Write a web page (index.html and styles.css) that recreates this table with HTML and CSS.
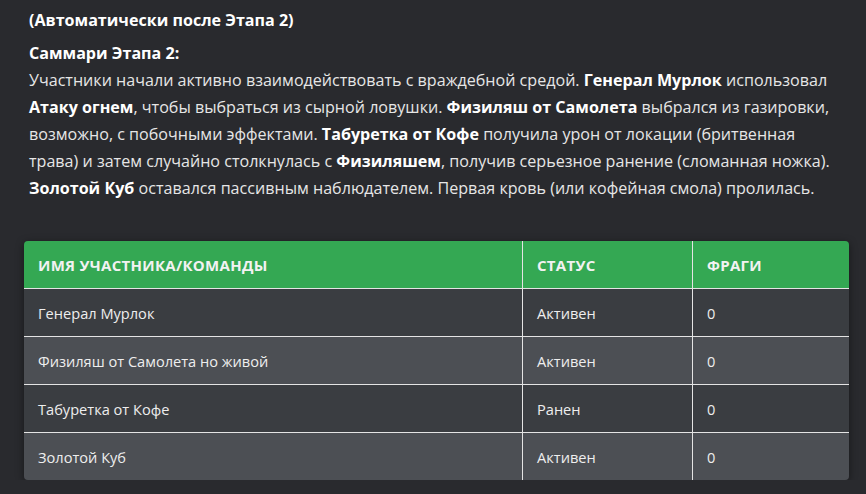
FILE: index.html
```html
<!DOCTYPE html>
<html lang="ru">
<head>
<meta charset="utf-8">
<link rel="stylesheet" href="styles.css">
</head>
<body>
<main class="page">
  <p class="title"><strong>(Автоматически после Этапа 2)</strong></p>
  <p class="summary"><strong>Саммари Этапа 2:</strong><br>Участники начали активно взаимодействовать с враждебной средой. <strong>Генерал Мурлок</strong> использовал <strong>Атаку огнем</strong>, чтобы выбраться из сырной ловушки. <strong>Физиляш от Самолета</strong> выбрался из газировки, возможно, с побочными эффектами. <strong>Табуретка от Кофе</strong> получила урон от локации (бритвенная трава) и затем случайно столкнулась с <strong>Физиляшем</strong>, получив серьезное ранение (сломанная ножка). <strong>Золотой Куб</strong> оставался пассивным наблюдателем. Первая кровь (или кофейная смола) пролилась.</p>
  <div class="table-wrap">
    <table class="stats">
      <thead>
        <tr><th class="c-name">Имя участника/команды</th><th class="c-status">Статус</th><th class="c-frags">Фраги</th></tr>
      </thead>
      <tbody>
        <tr><td>Генерал Мурлок</td><td>Активен</td><td>0</td></tr>
        <tr><td>Физиляш от Самолета но живой</td><td>Активен</td><td>0</td></tr>
        <tr><td>Табуретка от Кофе</td><td>Ранен</td><td>0</td></tr>
        <tr><td>Золотой Куб</td><td>Активен</td><td>0</td></tr>
      </tbody>
    </table>
  </div>
</main>
</body>
</html>
```

FILE: styles.css
```css
html, body {
  margin: 0;
  padding: 0;
  background: #292a2e;
}
body {
  font-family: "Open Sans", "Noto Sans", sans-serif;
  color: #e6e6e6;
  font-size: 16px;
  line-height: 27px;
}
.page {
  padding: 7px 17px 0 24px;
}
.title, .summary {
  margin: 0;
  padding-left: 5px;
  font-size: 16.1px;
}
.title { margin-bottom: 6px; }
strong { color: #ffffff; font-weight: 700; }
.summary { max-width: 808px; }
.table-wrap {
  margin-top: 39px;
  border-radius: 4px;
  overflow: hidden;
  box-shadow: 0 2px 8px rgba(0,0,0,0.45);
  width: 825px;
}
.stats {
  width: 100%;
  border-collapse: collapse;
  font-size: 14.6px;
  line-height: 20px;
}
.stats th {
  background: #34a853;
  color: #f2f2f2;
  text-transform: uppercase;
  font-weight: 700;
  font-size: 15px;
  letter-spacing: 0.3px;
  text-align: left;
  height: 47px;
  padding: 0 14px;
  border-left: 1px solid #e4e4e4;
  border-bottom: 1px solid #e4e4e4;
}
.stats td {
  height: 47px;
  padding: 0 14px;
  border-left: 1px solid #e4e4e4;
  border-bottom: 1px solid #e4e4e4;
  color: #eeeeee;
}
.stats th:first-child, .stats td:first-child { border-left: none; }
.stats tbody tr:last-child td { border-bottom: none; }
.stats tbody tr:nth-child(odd) td { background: #3a3d41; }
.stats tbody tr:nth-child(even) td { background: #4c4f54; }
.c-name { width: 470px; }
.c-status { width: 141px; }
```
